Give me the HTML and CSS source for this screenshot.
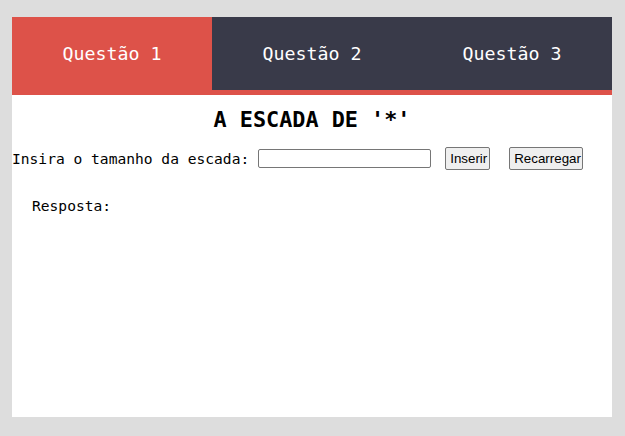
FILE: index.html
```html
<!DOCTYPE html>
<html lang="pt">
<head>
<meta charset="utf-8">
<title>A escada</title>
<link rel="stylesheet" href="styles.css">
</head>
<body>
<div class="container">
  <nav class="tabs">
    <div class="tab active">Questão 1</div>
    <div class="tab">Questão 2</div>
    <div class="tab">Questão 3</div>
  </nav>
  <main class="content">
    <h1 class="title">A ESCADA DE '*'</h1>
    <div class="form-row">
      <label class="label" for="tam">Insira o tamanho da escada:</label>
      <input class="field" id="tam" type="text">
      <button class="btn btn-insert">Inserir</button>
      <button class="btn btn-reload">Recarregar</button>
    </div>
    <p class="answer">Resposta:</p>
  </main>
</div>
</body>
</html>
```

FILE: styles.css
```css
html, body {
  margin: 0;
  padding: 0;
}
body {
  background: #dddddd;
  padding: 17px 12px 19px 12px;
  font-family: "DejaVu Sans Mono", "Liberation Mono", monospace;
}
.container {
  width: 600px;
  height: 400px;
  background: #ffffff;
  display: flex;
  flex-direction: column;
}
.tabs {
  display: flex;
  height: 73px;
  background: #393a49;
  border-bottom: 5px solid #dd5249;
}
.tab {
  width: 200px;
  display: flex;
  align-items: center;
  justify-content: center;
  color: #ffffff;
  font-size: 18.3px;
  padding-bottom: 1px;
}
.tab.active {
  background: #dd5249;
}
.content {
  display: flex;
  flex-direction: column;
}
.title {
  margin: 12px 0 0 0;
  text-align: center;
  font-size: 21.8px;
  font-weight: bold;
  line-height: 26px;
  color: #000;
}
.form-row {
  display: flex;
  align-items: center;
  margin-top: 14px;
  height: 23px;
  font-size: 14.6px;
  color: #000;
}
.label {
  margin-right: 9px;
}
.field {
  box-sizing: border-box;
  width: 173px;
  height: 19px;
  margin: 0;
  border: 1px solid #767676;
  border-radius: 2px;
  padding: 1px 2px;
  font-family: "Liberation Sans", Arial, sans-serif;
  font-size: 13.33px;
}
.btn {
  box-sizing: border-box;
  height: 23px;
  margin: 0;
  padding: 1px 4px;
  font-family: "Liberation Sans", Arial, sans-serif;
  font-size: 13.33px;
  color: #000;
  background: #efefef;
  border: 1px solid #767676;
  border-radius: 2px;
}
.btn-insert {
  margin-left: 14px;
  width: 45px;
}
.btn-reload {
  margin-left: 19px;
  width: 74px;
}
.answer {
  margin: 27px 0 0 20px;
  font-size: 14.6px;
  line-height: 17px;
  color: #000;
}
```
